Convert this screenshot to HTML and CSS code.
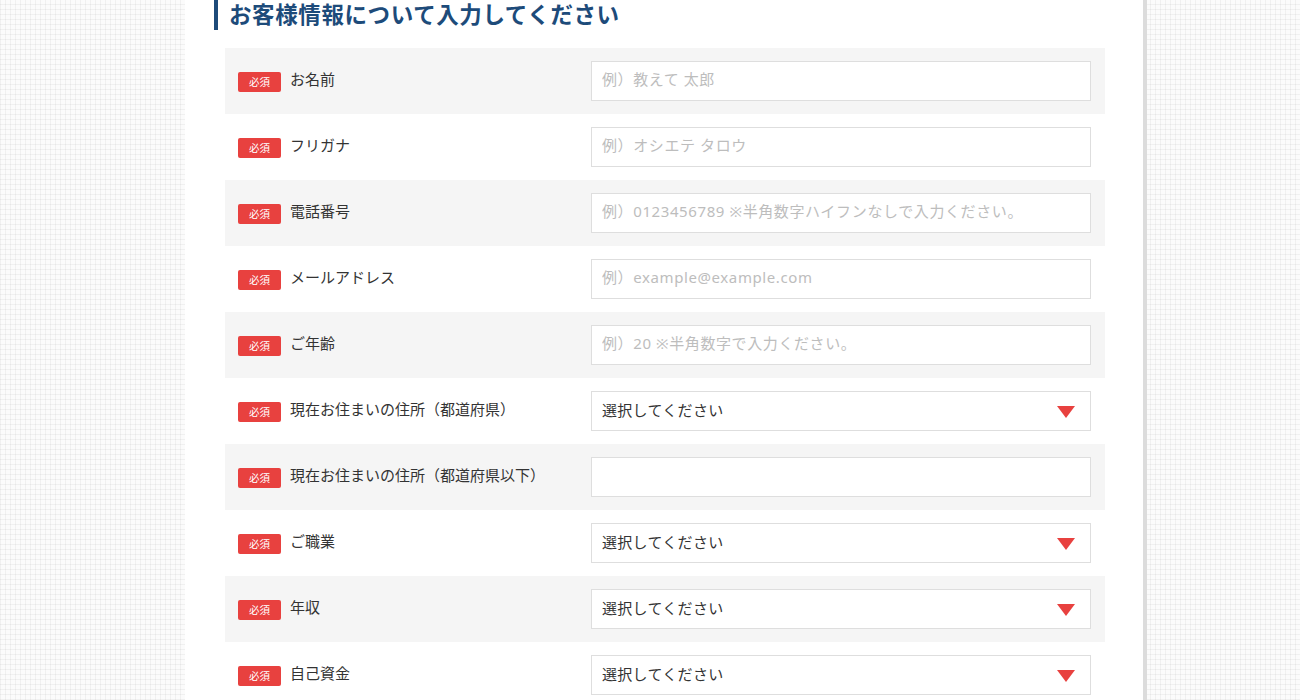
FILE: index.html
```html
<!DOCTYPE html>
<html lang="ja">
<head>
<meta charset="utf-8">
<link rel="stylesheet" href="styles.css">
</head>
<body>
<div class="panel">
  <h2 class="heading">お客様情報について入力してください</h2>
  <div class="form">
    <div class="row alt">
      <div class="label"><span class="req">必須</span><span class="name">お名前</span></div>
      <input class="field" type="text" placeholder="例）教えて 太郎">
    </div>
    <div class="row">
      <div class="label"><span class="req">必須</span><span class="name">フリガナ</span></div>
      <input class="field" type="text" placeholder="例）オシエテ タロウ">
    </div>
    <div class="row alt">
      <div class="label"><span class="req">必須</span><span class="name">電話番号</span></div>
      <input class="field" type="text" placeholder="例）0123456789 ※半角数字ハイフンなしで入力ください。">
    </div>
    <div class="row">
      <div class="label"><span class="req">必須</span><span class="name">メールアドレス</span></div>
      <input class="field" type="text" placeholder="例）example@example.com">
    </div>
    <div class="row alt">
      <div class="label"><span class="req">必須</span><span class="name">ご年齢</span></div>
      <input class="field" type="text" placeholder="例）20 ※半角数字で入力ください。">
    </div>
    <div class="row">
      <div class="label"><span class="req">必須</span><span class="name">現在お住まいの住所（都道府県）</span></div>
      <div class="field select"><span>選択してください</span><span class="arrow"></span></div>
    </div>
    <div class="row alt">
      <div class="label"><span class="req">必須</span><span class="name">現在お住まいの住所（都道府県以下）</span></div>
      <input class="field" type="text">
    </div>
    <div class="row">
      <div class="label"><span class="req">必須</span><span class="name">ご職業</span></div>
      <div class="field select"><span>選択してください</span><span class="arrow"></span></div>
    </div>
    <div class="row alt">
      <div class="label"><span class="req">必須</span><span class="name">年収</span></div>
      <div class="field select"><span>選択してください</span><span class="arrow"></span></div>
    </div>
    <div class="row">
      <div class="label"><span class="req">必須</span><span class="name">自己資金</span></div>
      <div class="field select"><span>選択してください</span><span class="arrow"></span></div>
    </div>
  </div>
</div>
</body>
</html>
```
FILE: styles.css
```css
html, body {
  margin: 0;
  padding: 0;
  height: 100%;
}
body {
  font-family: "Noto Sans", "Noto Sans CJK JP", sans-serif;
  color: #333;
  background-color: #fbfbfb;
  background-image:
    repeating-linear-gradient(90deg, rgba(0,0,0,0.045) 0 1px, transparent 1px 5px),
    repeating-linear-gradient(0deg, rgba(0,0,0,0.045) 0 1px, transparent 1px 5px);
  overflow: hidden;
}
.panel {
  margin-left: 185px;
  width: 918px;
  min-height: 100%;
  background: #fff;
  padding: 0 0 0 40px;
  border-right: 4px solid #dcdcdc;
}
.heading {
  margin: 0 0 18px -11px;
  padding: 0 0 4px 11px;
  border-left: 4px solid #1d4b7a;
  font-family: "Noto Sans CJK JP", sans-serif;
  font-size: 22.5px;
  line-height: 26px;
  font-weight: 700;
  color: #1d4b7a;
  letter-spacing: 0.6px;
}
.form {
  width: 880px;
}
.row {
  height: 66px;
  display: flex;
  align-items: center;
  padding: 0 14px 0 13px;
  background: #fff;
}
.row.alt {
  background: #f5f5f5;
}
.label {
  width: 353px;
  display: flex;
  align-items: center;
}
.req {
  width: 43px;
  height: 20px;
  margin-top: 1px;
  background: #e8413f;
  color: #fff;
  border-radius: 2px;
  font-family: "Noto Sans CJK JP", sans-serif;
  font-size: 10.5px;
  line-height: 20px;
  text-align: center;
  margin-right: 9px;
  flex-shrink: 0;
}
.name {
  font-size: 15px;
  line-height: 20px;
  color: #333;
  margin-bottom: 5px;
}
.field {
  box-sizing: border-box;
  width: 500px;
  height: 40px;
  border: 1px solid #dedede;
  background: #fff;
  padding: 0 10px 4px;
  font-family: "Noto Sans", "Noto Sans CJK JP", sans-serif;
  font-size: 15px;
  letter-spacing: 0.6px;
  color: #333;
  outline: none;
  margin: 0;
}
.field::placeholder {
  color: #bdbdbd;
}
.select {
  display: flex;
  align-items: center;
  justify-content: space-between;
  padding: 0 15px 4px 10px;
  letter-spacing: 0.3px;
}
.arrow {
  width: 0;
  height: 0;
  border-left: 9px solid transparent;
  border-right: 9px solid transparent;
  border-top: 12px solid #e8413f;
  margin-top: 6px;
}
```
